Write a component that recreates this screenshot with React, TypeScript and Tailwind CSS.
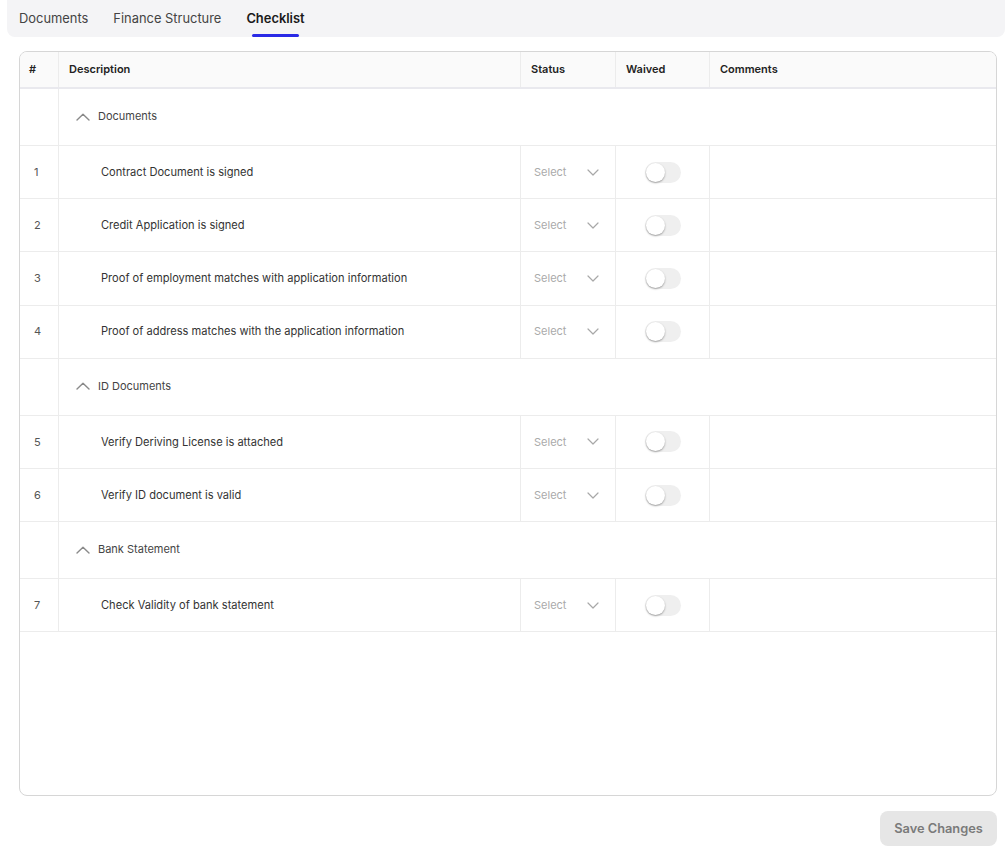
import React, { useState } from 'react';

type Item = { id: number; text: string };
type Group = { title: string; items: Item[] };

const GROUPS: Group[] = [
  {
    title: 'Documents',
    items: [
      { id: 1, text: 'Contract Document is signed' },
      { id: 2, text: 'Credit Application is signed' },
      { id: 3, text: 'Proof of employment matches with application information' },
      { id: 4, text: 'Proof of address matches with the application information' },
    ],
  },
  {
    title: 'ID Documents',
    items: [
      { id: 5, text: 'Verify Deriving License is attached' },
      { id: 6, text: 'Verify ID document is valid' },
    ],
  },
  {
    title: 'Bank Statement',
    items: [{ id: 7, text: 'Check Validity of bank statement' }],
  },
];

const TABS = ['Documents', 'Finance Structure', 'Checklist'];

const ChevronUp = () => (
  <svg width="14" height="8" viewBox="0 0 14 8" fill="none">
    <polyline points="1,7 7,1.2 13,7" stroke="#8a8a8a" strokeWidth="1.4" strokeLinecap="round" strokeLinejoin="round" />
  </svg>
);

const ChevronDown = () => (
  <svg width="12" height="7" viewBox="0 0 12 7" fill="none">
    <polyline points="1,1 6,6 11,1" stroke="#a8a8a8" strokeWidth="1.2" strokeLinecap="round" strokeLinejoin="round" />
  </svg>
);

const Toggle = () => {
  const [on, setOn] = useState(false);
  return (
    <button
      type="button"
      onClick={() => setOn(v => !v)}
      className={`w-[36px] h-[21px] rounded-full flex items-center p-[1px] ${on ? 'bg-[#2a2ae6] justify-end' : 'bg-[#efefef] justify-start'}`}
    >
      <span className="w-[19px] h-[19px] rounded-full bg-white shadow-[0_1px_2px_rgba(0,0,0,0.35)]" />
    </button>
  );
};

const cols = 'grid grid-cols-[39px_462px_95px_94px_1fr]';

export default function App() {
  const [active, setActive] = useState('Checklist');

  return (
    <div className="w-[1007px] min-h-[851px] bg-white text-[11px] text-[#333]" style={{ fontFamily: 'Inter, "Noto Sans", sans-serif' }}>
      {/* Tabs */}
      <div className="ml-[7px] mr-[2px] h-[37px] bg-[#f4f4f6] rounded-b-lg flex items-stretch pl-[12px] gap-[25px]">
        {TABS.map(tab => {
          const isActive = tab === active;
          return (
            <button
              key={tab}
              type="button"
              onClick={() => setActive(tab)}
              className={`flex flex-col items-center justify-end text-[12.9px] ${isActive ? 'font-semibold text-[#1a1a1a]' : 'text-[#444]'}`}
            >
              <span className="leading-none mb-[8px]">{tab}</span>
              <span className={`h-[3px] w-[47px] rounded-sm ${isActive ? 'bg-[#2a2ae6]' : 'bg-transparent'}`} />
            </button>
          );
        })}
      </div>

      {/* Table */}
      <div className="ml-[19px] mr-[10px] mt-[14px] h-[745px] border border-[#d6d6d6] rounded-lg overflow-hidden">
        <div className={`${cols} h-[37px] bg-[#fafafa] border-b-2 border-[#e9e9ee] font-semibold text-[#222]`}>
          <div className="flex items-center pl-[9px] border-r border-[#ececec]">#</div>
          <div className="flex items-center pl-[10px] border-r border-[#ececec]">Description</div>
          <div className="flex items-center pl-[10px] border-r border-[#ececec]">Status</div>
          <div className="flex items-center pl-[10px] border-r border-[#ececec]">Waived</div>
          <div className="flex items-center pl-[10px]">Comments</div>
        </div>

        {GROUPS.map(group => (
          <div key={group.title}>
            <div className={`${cols} h-[57px] border-b border-[#ececec]`}>
              <div className="border-r border-[#ececec]" />
              <div className="col-span-4 flex items-center pl-[17px] pb-[1px] gap-[8px] text-[#444]">
                <ChevronUp />
                <span>{group.title}</span>
              </div>
            </div>
            {group.items.map(item => (
              <div key={item.id} className={`${cols} h-[53.2px] border-b border-[#ececec]`}>
                <div className="flex items-center pl-[14px] border-r border-[#ececec] text-[#555]">{item.id}</div>
                <div className="flex items-center pl-[42px] border-r border-[#ececec] text-[11.1px] text-[#333]">{item.text}</div>
                <div className="flex items-center pl-[13px] pr-[16px] justify-between border-r border-[#ececec] text-[#aaa]">
                  <span>Select</span>
                  <ChevronDown />
                </div>
                <div className="flex items-center justify-center border-r border-[#ececec]">
                  <Toggle />
                </div>
                <div />
              </div>
            ))}
          </div>
        ))}
      </div>

      <div className="mr-[10px] mt-[15px] flex justify-end">
        <button
          type="button"
          disabled
          className="w-[117px] h-[35px] rounded-lg bg-[#e6e6e6] text-[12.8px] font-semibold text-[#7a7a7a]"
        >
          Save Changes
        </button>
      </div>
    </div>
  );
}
